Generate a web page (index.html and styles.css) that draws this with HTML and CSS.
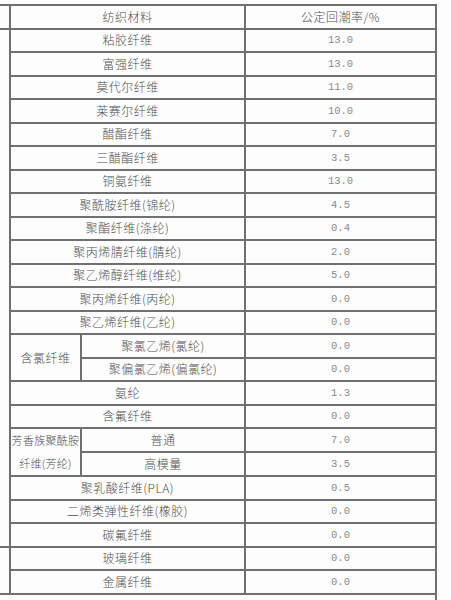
FILE: index.html
```html
<!DOCTYPE html>
<html lang="zh-CN">
<head>
<meta charset="utf-8">
<title>公定回潮率</title>
<link rel="stylesheet" href="styles.css">
</head>
<body>
<table class="grid">
  <colgroup>
    <col class="c0"><col class="c1"><col class="c2"><col class="c3">
  </colgroup>
  <tr><td class="edge"></td><td colspan="2" class="name">纺织材料</td><td class="name">公定回潮率/%</td></tr>
  <tr><td class="edge" rowspan="22"></td><td colspan="2" class="name">粘胶纤维</td><td class="num">13.0</td></tr>
  <tr><td colspan="2" class="name">富强纤维</td><td class="num">13.0</td></tr>
  <tr><td colspan="2" class="name">莫代尔纤维</td><td class="num">11.0</td></tr>
  <tr><td colspan="2" class="name">莱赛尔纤维</td><td class="num">10.0</td></tr>
  <tr><td colspan="2" class="name">醋酯纤维</td><td class="num">7.0</td></tr>
  <tr><td colspan="2" class="name">三醋酯纤维</td><td class="num">3.5</td></tr>
  <tr><td colspan="2" class="name">铜氨纤维</td><td class="num">13.0</td></tr>
  <tr><td colspan="2" class="name">聚酰胺纤维(锦纶)</td><td class="num">4.5</td></tr>
  <tr><td colspan="2" class="name">聚酯纤维(涤纶)</td><td class="num">0.4</td></tr>
  <tr><td colspan="2" class="name">聚丙烯腈纤维(腈纶)</td><td class="num">2.0</td></tr>
  <tr><td colspan="2" class="name">聚乙烯醇纤维(维纶)</td><td class="num">5.0</td></tr>
  <tr><td colspan="2" class="name">聚丙烯纤维(丙纶)</td><td class="num">0.0</td></tr>
  <tr><td colspan="2" class="name">聚乙烯纤维(乙纶)</td><td class="num">0.0</td></tr>
  <tr><td rowspan="2" class="name">含氯纤维</td><td class="name">聚氯乙烯(氯纶)</td><td class="num">0.0</td></tr>
  <tr><td class="name">聚偏氯乙烯(偏氯纶)</td><td class="num">0.0</td></tr>
  <tr><td colspan="2" class="name">氨纶</td><td class="num">1.3</td></tr>
  <tr><td colspan="2" class="name">含氟纤维</td><td class="num">0.0</td></tr>
  <tr><td rowspan="2" class="name wide">芳香族聚酰胺<br>纤维(芳纶)</td><td class="name">普通</td><td class="num">7.0</td></tr>
  <tr><td class="name">高模量</td><td class="num">3.5</td></tr>
  <tr><td colspan="2" class="name">聚乳酸纤维(PLA)</td><td class="num">0.5</td></tr>
  <tr><td colspan="2" class="name">二烯类弹性纤维(橡胶)</td><td class="num">0.0</td></tr>
  <tr><td colspan="2" class="name">碳氟纤维</td><td class="num">0.0</td></tr>
  <tr><td class="edge" rowspan="2"></td><td colspan="2" class="name">玻璃纤维</td><td class="num">0.0</td></tr>
  <tr><td colspan="2" class="name">金属纤维</td><td class="num">0.0</td></tr>
  <tr class="tail"><td class="blank"></td><td colspan="3" class="tailcell"></td></tr>
</table>
</body>
</html>
```

FILE: styles.css
```css
html, body {
  margin: 0;
  padding: 0;
  background: #fdfdfd;
}

.grid {
  border-collapse: collapse;
  table-layout: fixed;
  width: 436px;
  margin-top: 4px;
  font-family: "Noto Sans CJK SC", sans-serif;
}

.c0 { width: 10px; }
.c1 { width: 71px; }
.c2 { width: 164px; }
.c3 { width: 191px; }

.grid tr { height: 23.5px; }

.grid td {
  border: 2px solid #707070;
  padding: 0;
  text-align: center;
  vertical-align: middle;
  line-height: 16px;
  white-space: nowrap;
}

.grid td.edge {
  border-left: none;
}

.name {
  font-size: 12px;
  font-weight: 300;
  letter-spacing: 0.5px;
  color: #505050;
}

.grid td.wide {
  font-size: 11px;
  letter-spacing: 0.3px;
  line-height: 23px;
}

.num {
  font-family: "Liberation Mono", monospace;
  font-size: 10.5px;
  color: #8a8a8a;
  padding-right: 2px;
}

.grid tr.tail { height: 8px; }

.grid td.blank {
  border: none;
  border-top: 2px solid #707070;
}

.grid td.tailcell {
  border-left: none;
  border-bottom: none;
  border-right: 2px solid #707070;
}
```
